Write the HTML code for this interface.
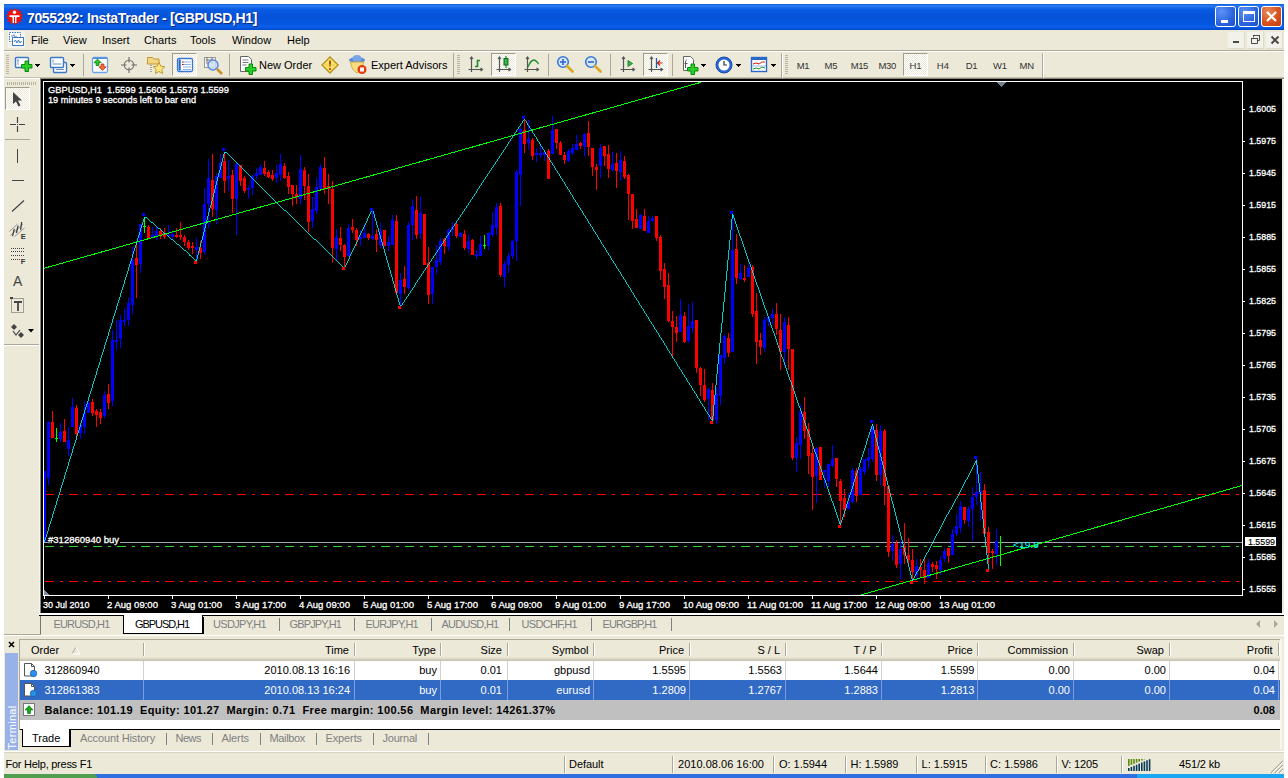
<!DOCTYPE html><html><head><meta charset="utf-8"><title>7055292: InstaTrader - [GBPUSD,H1]</title><style>
*{box-sizing:border-box;margin:0;padding:0}
html,body{width:1288px;height:778px;overflow:hidden;background:#fff}
body{position:relative;font-family:"Liberation Sans","DejaVu Sans",sans-serif;font-size:11px;color:#000}
.a{position:absolute}
.t{position:absolute;white-space:nowrap;line-height:13px;height:13px}
#win{left:4px;top:4px;width:1280px;height:770px;background:#ece9d8}
#title{left:4px;top:4px;width:1280px;height:26px;background:linear-gradient(#0a5fe0 0,#2c7bf0 2px,#0a5ce4 5px,#0453d9 12px,#0556df 20px,#0a5fe8 23px,#0046c8 26px)}
#title .tt{left:23px;top:5.500px;font-family:"Liberation Sans",sans-serif;font-weight:bold;font-size:14px;line-height:16px;height:16px;color:#fff;text-shadow:1px 1px 0 #0a2a80}
.cb{position:absolute;top:2px;width:21px;height:21px;border:1px solid #fff;border-radius:3px;background:radial-gradient(circle at 30% 25%,#5f92f5 0,#2a63de 60%,#1b50c8 100%)}
.cb.x{background:radial-gradient(circle at 30% 25%,#e8895a 0,#d9531e 55%,#c23c10 100%)}
.menu{color:#000}
.sep{position:absolute;width:1px;background:#aca899}
.grip{position:absolute;width:3px;background:repeating-linear-gradient(#b8b4a0 0,#b8b4a0 1px,transparent 1px,transparent 2px)}
.pressed{position:absolute;background:#f7f6ef;border:1px solid;border-color:#a09c8c #fff #fff #a09c8c;background-image:repeating-conic-gradient(#fff 0 25%,#ece9d8 0 50%);background-size:2px 2px}
.tf{color:#333}
.hdr{position:absolute;top:640px;height:19px}
.cell{position:absolute;white-space:nowrap;line-height:13px;height:13px;text-align:right}
.st{position:absolute;top:758px;white-space:nowrap;line-height:13px}
.ssep{position:absolute;top:756px;width:2px;height:17px;border-left:1px solid #aca899;border-right:1px solid #fff}
.ax{font-size:9.5px;fill:#fff;stroke:#fff;stroke-width:.3px;font-family:"Liberation Sans",sans-serif}
</style></head><body>
<div class="a" id="win"></div>
<div class="a" id="title"><div class="t tt" style="letter-spacing:-0.352px;">7055292: InstaTrader - [GBPUSD,H1]</div>
<svg class="a" style="left:2px;top:4px" width="17" height="17" viewBox="0 0 17 17"><polygon points="8.5,0 10,2.2 12.5,0.8 12.8,3.6 15.6,3 14.6,5.6 17,6.8 15,8.5 17,10.4 14.4,11.2 15.4,13.9 12.7,13.4 12.3,16.2 10,14.8 8.5,17 7,14.8 4.7,16.2 4.3,13.4 1.6,13.9 2.6,11.2 0,10.4 2,8.5 0,6.8 2.4,5.6 1.4,3 4.2,3.6 4.5,0.8 7,2.2" fill="#f0120a"/><circle cx="8.5" cy="4.3" r="1.7" fill="#fff"/><path d="M3.5 7.2h10v1.8h-1.6c-1 0-1.5.6-1.5 1.5v4.5h-1.4V9h-1v6h-1.400v-4.500c0-.9-.5-1.500-1.500-1.500H3.500z" fill="#fff"/></svg>
<div class="cb" style="left:1211px"><div class="a" style="left:5px;top:13px;width:7px;height:3px;background:#fff"></div></div>
<div class="cb" style="left:1234px"><div class="a" style="left:4px;top:4px;width:12px;height:11px;border:1px solid #fff;border-top-width:3px"></div></div>
<div class="cb x" style="left:1257px"><svg class="a" style="left:0;top:0" width="19" height="19"><path d="M5 5l9 9M14 5l-9 9" stroke="#fff" stroke-width="2.2" fill="none"/></svg></div>
</div>
<div class="a" style="left:4px;top:50px;width:1280px;height:1px;background:#aca899"></div><div class="a" style="left:4px;top:51px;width:1280px;height:1px;background:#fff"></div>
<svg class="a" style="left:8px;top:31px" width="17" height="17" viewBox="0 0 17 17"><rect x="0" y="0" width="17" height="17" fill="#f4f3ee"/><rect x="1.5" y="1.500" width="11" height="9" fill="#fff" stroke="#3c78c8" stroke-dasharray="1.5 1"/><rect x="4.500" y="6.500" width="11" height="8" fill="#fff" stroke="#3c78c8"/><path d="M6 11l1.500-2 1.500 3 1.500-3 1.500 3 1.500-2" stroke="#3c78c8" fill="none"/><path d="M3 5h2l1-1.500 1 2.500 2-1" stroke="#3c78c8" fill="none" stroke-width=".8"/></svg>
<div class="t menu" style="left:31px;top:34px;font-size:11px">File</div>
<div class="t menu" style="left:63px;top:34px;font-size:11px">View</div>
<div class="t menu" style="left:102px;top:34px;font-size:11px">Insert</div>
<div class="t menu" style="left:144px;top:34px;font-size:11px">Charts</div>
<div class="t menu" style="left:190px;top:34px;font-size:11px">Tools</div>
<div class="t menu" style="left:232px;top:34px;font-size:11px">Window</div>
<div class="t menu" style="left:287px;top:34px;font-size:11px">Help</div>
<div class="a" style="left:1228px;top:32px;width:17px;height:17px;background:#f3f2ea;border-right:1px solid #dedbc8;border-bottom:1px solid #dedbc8"></div>
<div class="a" style="left:1247px;top:32px;width:17px;height:17px;background:#f3f2ea;border-right:1px solid #dedbc8;border-bottom:1px solid #dedbc8"></div>
<div class="a" style="left:1266px;top:32px;width:17px;height:17px;background:#f3f2ea;border-right:1px solid #dedbc8;border-bottom:1px solid #dedbc8"></div>
<div class="a" style="left:1233px;top:41px;width:6px;height:2px;background:#4a4a4a"></div>
<svg class="a" style="left:1250px;top:34px" width="12" height="12"><path d="M3.500 3.500V1.500H9.500V6.500H7.500M1.500 4.500H7.500V9.500H1.500z" fill="none" stroke="#4a4a4a" stroke-width="1"/><path d="M1 4.500h7M3 1.500h7" stroke="#4a4a4a" stroke-width="1.200"/></svg>
<svg class="a" style="left:1270px;top:35px" width="10" height="10"><path d="M1.500 1.500l7 7M8.500 1.500l-7 7" stroke="#4a4a4a" stroke-width="2" fill="none"/></svg>
<div class="a" style="left:4px;top:77px;width:1280px;height:1px;background:#c5c2b2"></div>
<div class="grip" style="left:6px;top:55px;height:20px"></div>
<svg class="a" style="left:14px;top:56px" width="20" height="18" viewBox="0 0 20 18"><rect x="1.500" y="1.500" width="13" height="10" rx="1" fill="#fff" stroke="#3c78c8" stroke-width="1.400"/><path d="M4 4v5M3 5l1-1.500 1 1.500" stroke="#7aa0d0" fill="none"/><path d="M7.500 8.500h3.500v-3.500h3.500v3.500h3.500v3.500h-3.500v3.500h-3.500v-3.500h-3.500z" fill="#28d028" stroke="#0a8a0a"/></svg>
<svg class="a" style="left:35px;top:64px" width="5" height="3" shape-rendering="crispEdges"><path d="M0 0h5v1h-5zM1 1h3v1h-3zM2 2h1v1h-1z" fill="#000"/></svg>
<svg class="a" style="left:49px;top:56px" width="20" height="18" viewBox="0 0 20 18"><rect x="4.500" y="6.500" width="13" height="10" rx="1" fill="#fff" stroke="#3c78c8" stroke-width="1.400"/><rect x="1.500" y="1.500" width="13" height="10" rx="1" fill="#fff" stroke="#3c78c8" stroke-width="1.400"/><path d="M4 3.500v3M3.500 8h9M7 13.500h8" stroke="#6a90c0" fill="none"/></svg>
<svg class="a" style="left:70px;top:64px" width="5" height="3" shape-rendering="crispEdges"><path d="M0 0h5v1h-5zM1 1h3v1h-3zM2 2h1v1h-1z" fill="#000"/></svg>
<div class="sep" style="left:83px;top:54px;height:22px"></div>
<svg class="a" style="left:91px;top:56px" width="18" height="18" viewBox="0 0 18 18"><rect x="1.500" y="1.500" width="15" height="15" rx="1.500" fill="#fff" stroke="#6aa6ee" stroke-width="1.300"/><path d="M2 2.200h14" stroke="#4a86de" stroke-width="1.400"/><path d="M6.500 3l3.700 3.700h-2.200v2.800h-3v-2.800h-2.200z" fill="#2fbf2f" stroke="#0a7a0a" stroke-width=".7"/><path d="M11.500 14.500l-3.700-3.700h2.200v-2.800h3v2.800h2.200z" fill="#f06a3a" stroke="#b03010" stroke-width=".7"/></svg>
<svg class="a" style="left:120px;top:56px" width="18" height="18" viewBox="0 0 18 18"><circle cx="9" cy="9" r="4.800" fill="none" stroke="#777" stroke-width="1.100"/><path d="M9 1v5.500M9 11.500v5.500M1 9h5.500M11.500 9h5.500" stroke="#666" stroke-width="1.100"/></svg>
<svg class="a" style="left:146px;top:55px" width="20" height="20" viewBox="0 0 20 20"><path d="M1.500 4.500v-2h5l1.500 1.500h5v5h-11.500z" fill="#f3d680" stroke="#c09a30"/><path d="M5 10v8" stroke="#666" stroke-dasharray="1 1"/><path d="M13 7.500l1.800 3.700 4 .5-3 2.800.8 4-3.600-2-3.600 2 .8-4-3-2.800 4-.5z" fill="#ffe680" stroke="#c09a30"/></svg>
<div class="pressed" style="left:172px;top:53px;width:25px;height:23px"></div>
<svg class="a" style="left:176px;top:56px" width="18" height="18" viewBox="0 0 18 18"><rect x="1.500" y="2.500" width="15" height="13" rx="1.500" fill="#fff" stroke="#3a78d0" stroke-width="1.300"/><rect x="2.500" y="3.500" width="2.200" height="11" fill="#2a68c8"/><path d="M7 6h8M7 8.500h8M7 11h8M7 13.500h8" stroke="#8ab0e8" stroke-width="1"/><path d="M6 6h1.500M6 8.500h1.500" stroke="#d00" stroke-width="1"/></svg>
<svg class="a" style="left:203px;top:55px" width="21" height="21" viewBox="0 0 21 21"><rect x="1.500" y="2.500" width="11" height="10" fill="#f4f4f4" stroke="#999"/><path d="M4 2v7M9 2v7M3 5h7" stroke="#777"/><circle cx="10" cy="10" r="5" fill="#cfe0f8" fill-opacity=".8" stroke="#5a8ad8" stroke-width="1.500"/><path d="M14 14l5 5" stroke="#c89020" stroke-width="2.500"/></svg>
<div class="sep" style="left:229px;top:54px;height:22px"></div>
<svg class="a" style="left:238px;top:55px" width="20" height="21" viewBox="0 0 20 21"><path d="M2.500 1.500h8l3 3v12h-11z" fill="#fff" stroke="#666"/><path d="M4.500 5h6M4.500 7.500h6M4.500 10h4" stroke="#777"/><path d="M7.500 12.500h3.500v-3.500h3.500v3.500h3.500v3.500h-3.500v3.500h-3.500v-3.500h-3.500z" fill="#28d028" stroke="#0a8a0a"/></svg>
<div class="t" style="left:259px;top:59px;font-size:11px">New Order</div>
<svg class="a" style="left:321px;top:56px" width="18" height="18" viewBox="0 0 18 18"><path d="M9 1l8 8-8 8-8-8z" fill="#fbe36a" stroke="#b8901a" stroke-width="1.400"/><path d="M9 4.500v6" stroke="#a03010" stroke-width="1.600"/><circle cx="9" cy="13" r="1" fill="#a03010"/><path d="M4 9h10" stroke="#e8c040" stroke-width=".8"/></svg>
<svg class="a" style="left:348px;top:54px" width="20" height="22" viewBox="0 0 20 22"><ellipse cx="9" cy="6" rx="8" ry="3" fill="#5a8ad8"/><ellipse cx="9" cy="4.500" rx="4.500" ry="3.500" fill="#7aa6e8"/><path d="M2.500 8c1 6 3 9 6.500 11 3.500-2 5.500-5 6.500-11z" fill="#f8de80" stroke="#c8a030" stroke-width=".8"/><circle cx="14" cy="15.500" r="4.500" fill="#e83a10"/><rect x="12" y="13.500" width="4" height="4" fill="#fff"/></svg>
<div class="t" style="left:371px;top:59px;font-size:11px">Expert Advisors</div>
<div class="sep" style="left:453px;top:53px;height:25px"></div>
<div class="grip" style="left:457px;top:55px;height:20px"></div>
<svg class="a" style="left:468px;top:56px" width="16" height="18" viewBox="0 0 16 18"><path d="M3.500 1v15M0.500 13.500h14M2 3l1.500-2 1.500 2M12.500 12l2 1.500-2 1.500" stroke="#555" stroke-width="1.200" fill="none"/><path d="M7 10.500h2.500v-6h2.500" stroke="#1a8a2a" stroke-width="1.600" fill="none"/></svg>
<div class="pressed" style="left:491px;top:53px;width:25px;height:23px"></div>
<svg class="a" style="left:496px;top:55px" width="16" height="19" viewBox="0 0 16 19"><path d="M3.500 2v15M0.500 14.500h14M2 4l1.500-2 1.500 2M12.500 13l2 1.500-2 1.500" stroke="#555" stroke-width="1.200" fill="none"/><path d="M10 1v12" stroke="#1a8a2a" stroke-width="1.200"/><rect x="8" y="3.500" width="4" height="6.500" fill="#3cb04c" stroke="#0a6a1a"/></svg>
<svg class="a" style="left:524px;top:56px" width="16" height="18" viewBox="0 0 16 18"><path d="M3.500 1v15M0.500 13.500h14M2 3l1.500-2 1.500 2M12.500 12l2 1.500-2 1.500" stroke="#555" stroke-width="1.200" fill="none"/><path d="M4 11c2-5 4-7 6-7s3 2 4.500 4" stroke="#1a8a2a" stroke-width="1.300" fill="none"/></svg>
<div class="sep" style="left:548px;top:54px;height:22px"></div>
<svg class="a" style="left:556px;top:55px" width="19" height="19" viewBox="0 0 19 19"><circle cx="7" cy="7" r="5.300" fill="#d6e6fb" stroke="#3a78d8" stroke-width="1.600"/><path d="M11 11l5.500 5.500" stroke="#d8a820" stroke-width="2.600" stroke-linecap="round"/><path d="M4 7h6" stroke="#2a68c8" stroke-width="1.600"/><path d="M7 4v6" stroke="#2a68c8" stroke-width="1.600"/></svg>
<svg class="a" style="left:584px;top:55px" width="19" height="19" viewBox="0 0 19 19"><circle cx="7" cy="7" r="5.300" fill="#d6e6fb" stroke="#3a78d8" stroke-width="1.600"/><path d="M11 11l5.500 5.500" stroke="#d8a820" stroke-width="2.600" stroke-linecap="round"/><path d="M4 7h6" stroke="#2a68c8" stroke-width="1.600"/></svg>
<div class="sep" style="left:610px;top:54px;height:22px"></div>
<svg class="a" style="left:620px;top:56px" width="16" height="18" viewBox="0 0 16 18"><path d="M3.500 1v15M0.500 13.500h14M2 3l1.500-2 1.500 2M12.500 12l2 1.500-2 1.500" stroke="#555" stroke-width="1.200" fill="none"/><path d="M8 4.500l4.500 3-4.500 3z" fill="#3cb04c" stroke="#1a8a2a"/></svg>
<div class="pressed" style="left:643px;top:53px;width:25px;height:23px"></div>
<svg class="a" style="left:648px;top:56px" width="16" height="18" viewBox="0 0 16 18"><path d="M3.500 1v15M0.500 13.500h14M2 3l1.500-2 1.500 2M12.500 12l2 1.500-2 1.500" stroke="#555" stroke-width="1.200" fill="none"/><path d="M8.500 2v10" stroke="#1a5ab8" stroke-width="1.300"/><path d="M14.500 7h-5M12 4.500l-2.500 2.500 2.500 2.500" stroke="#c02010" stroke-width="1.200" fill="none"/></svg>
<div class="sep" style="left:672px;top:54px;height:22px"></div>
<svg class="a" style="left:681px;top:55px" width="20" height="21" viewBox="0 0 20 21"><path d="M2.500 1.500h7l3 3v11h-10z" fill="#fff" stroke="#666"/><path d="M6 5c-1 0-1.500 1-1.500 2v6M3.500 8.500h3" stroke="#555" fill="none"/><path d="M6.500 12.500h3.500v-3.500h3.500v3.500h3.500v3.500h-3.500v3.500h-3.500v-3.500h-3.500z" fill="#28d028" stroke="#0a8a0a"/></svg>
<svg class="a" style="left:701px;top:64px" width="5" height="3" shape-rendering="crispEdges"><path d="M0 0h5v1h-5zM1 1h3v1h-3zM2 2h1v1h-1z" fill="#000"/></svg>
<svg class="a" style="left:715px;top:56px" width="18" height="18" viewBox="0 0 18 18"><circle cx="9" cy="9" r="8" fill="#2a68d8" stroke="#1a48a8"/><circle cx="9" cy="9" r="5.500" fill="#fff"/><path d="M9 5v4h3" stroke="#333" stroke-width="1.200" fill="none"/></svg>
<svg class="a" style="left:736px;top:64px" width="5" height="3" shape-rendering="crispEdges"><path d="M0 0h5v1h-5zM1 1h3v1h-3zM2 2h1v1h-1z" fill="#000"/></svg>
<svg class="a" style="left:750px;top:56px" width="18" height="18" viewBox="0 0 18 18"><rect x="1.500" y="1.500" width="15" height="14" fill="#fff" stroke="#2a68c8" stroke-width="1.400"/><rect x="1.500" y="1.500" width="15" height="2.500" fill="#2a68c8"/><path d="M3 8l3-1 3 1 3-2 3 0" stroke="#d02010" fill="none"/><path d="M3 13l3-1 3 1 3-2 3 1" stroke="#1a9a2a" fill="none"/><path d="M2 10h14" stroke="#9ab8e8"/></svg>
<svg class="a" style="left:771px;top:64px" width="5" height="3" shape-rendering="crispEdges"><path d="M0 0h5v1h-5zM1 1h3v1h-3zM2 2h1v1h-1z" fill="#000"/></svg>
<div class="a" style="left:781px;top:53px;width:2px;height:25px;border-left:1px solid #aca899;border-right:1px solid #fff"></div>
<div class="grip" style="left:785px;top:55px;height:20px"></div>
<div class="pressed" style="left:903px;top:53px;width:25px;height:23px"></div>
<div class="t tf" style="letter-spacing:-0.352px;left:796.8px;top:59px;font-size:9.500px">M1</div>
<div class="t tf" style="letter-spacing:-0.202px;left:824.5px;top:59px;font-size:9.500px">M5</div>
<div class="t tf" style="letter-spacing:-0.428px;left:850.7px;top:59px;font-size:9.500px">M15</div>
<div class="t tf" style="letter-spacing:-0.395px;left:878.6px;top:59px;font-size:9.500px">M30</div>
<div class="t tf" style="letter-spacing:-0.128px;left:909.5px;top:59px;font-size:9.500px">H1</div>
<div class="t tf" style="letter-spacing:0.172px;left:936.8px;top:59px;font-size:9.500px">H4</div>
<div class="t tf" style="letter-spacing:-0.278px;left:965.7px;top:59px;font-size:9.500px">D1</div>
<div class="t tf" style="letter-spacing:-0.125px;left:993px;top:59px;font-size:9.500px">W1</div>
<div class="t tf" style="letter-spacing:-0.241px;left:1019.6px;top:59px;font-size:9.500px">MN</div>
<div class="a" style="left:1042px;top:53px;width:2px;height:25px;border-left:1px solid #aca899;border-right:1px solid #fff"></div>
<div class="a" style="left:4px;top:78px;width:36px;height:1px;background:#fff"></div>
<div class="a" style="left:39px;top:79px;width:1px;height:534px;background:#f6f5ee"></div>
<div class="a" style="left:40px;top:79px;width:1px;height:534px;background:#8a8878"></div>
<div class="a" style="left:7px;top:82px;width:29px;height:3px;background:repeating-linear-gradient(90deg,#b8b4a0 0,#b8b4a0 1px,transparent 1px,transparent 2px)"></div>
<div class="pressed" style="left:5px;top:87px;width:25px;height:23px"></div>
<svg class="a" style="left:11px;top:91px" width="12" height="16" viewBox="0 0 12 16"><path d="M2 1v12l3-2.500 2.500 5 2-1-2.500-5h4z" fill="#444"/></svg>
<svg class="a" style="left:10px;top:117px" width="15" height="15" viewBox="0 0 15 15"><path d="M7.500 0v6M7.500 9v6M0 7.500h6M9 7.500h6" stroke="#444" stroke-width="1.200"/><rect x="7" y="7" width="1" height="1" fill="#444"/></svg>
<div class="a" style="left:5px;top:139px;width:25px;height:1px;background:#aca899"></div>
<div class="a" style="left:17px;top:149px;width:1px;height:14px;background:#444"></div>
<div class="a" style="left:12px;top:180px;width:12px;height:1px;background:#444"></div>
<svg class="a" style="left:10px;top:198px" width="16" height="16" viewBox="0 0 16 16"><path d="M2 13.500L14 2.500" stroke="#444" stroke-width="1.200"/></svg>
<svg class="a" style="left:4px;top:215px" width="36" height="55" viewBox="0 0 36 55"><path d="M5.300 16.600L13.800 8.800M6.400 20.500L19 9.200M10.600 21.600L20.500 13" stroke="#9a9a9a" stroke-width="1"/><path d="M8.500 21.200L10.300 13.800M12.400 18L14.100 10.600M16.600 14.900L17.700 7" stroke="#444" stroke-width="1.300"/><text x="16.800" y="23.800" font-size="7.500" font-weight="bold" fill="#333" font-family="Liberation Sans,sans-serif">E</text><path d="M7 33.500h14M7 36.500h14M7 40.500h14M7 44.500h10" stroke="#444" stroke-width="1" stroke-dasharray="1 1"/><text x="16.800" y="48.800" font-size="7.500" font-weight="bold" fill="#333" font-family="Liberation Sans,sans-serif">F</text></svg>
<div class="t" style="left:13px;top:273px;font-size:14px;line-height:16px;height:16px;color:#444">A</div>
<svg class="a" style="left:10px;top:297px" width="16" height="17" viewBox="0 0 16 17"><rect x="1.500" y="1.500" width="12" height="14" fill="none" stroke="#555" stroke-dasharray="1 1"/><path d="M4 5h8M8 5v9" stroke="#444" stroke-width="1.800"/><rect x="0" y="0" width="3" height="2" fill="#444"/></svg>
<svg class="a" style="left:10px;top:323px" width="16" height="16" viewBox="0 0 16 16"><path d="M4 1l3 3-3 3-3-3z" fill="#444"/><path d="M11 9l3 3-3 3-3-3z" fill="#444"/><path d="M3 8l3 4 4-5" stroke="#444" stroke-width="1.200" fill="none"/></svg>
<svg class="a" style="left:28px;top:329px" width="7" height="4" viewBox="0 0 7 4"><path d="M0 0h6l-3 3.500z" fill="#000"/></svg>
<div class="a" style="left:4px;top:344px;width:35px;height:1px;background:#aca899"></div><div class="a" style="left:4px;top:345px;width:35px;height:1px;background:#fff"></div>
<svg class="a" style="left:0;top:0" width="1288" height="778" viewBox="0 0 1288 778" shape-rendering="crispEdges">
<rect x="40" y="78" width="1244" height="1" fill="#8a8674"/>
<rect x="41" y="79" width="1241" height="534" fill="#000"/>
<rect x="43.500" y="81.500" width="1199" height="514" fill="none" stroke="#fff" stroke-width="1"/>
<rect x="1243" y="109" width="2" height="1" fill="#fff"/>
<text class="ax" x="1249" y="112" textLength="27" lengthAdjust="spacingAndGlyphs">1.6005</text>
<rect x="1243" y="141" width="2" height="1" fill="#fff"/>
<text class="ax" x="1249" y="144" textLength="27" lengthAdjust="spacingAndGlyphs">1.5975</text>
<rect x="1243" y="173" width="2" height="1" fill="#fff"/>
<text class="ax" x="1249" y="176" textLength="27" lengthAdjust="spacingAndGlyphs">1.5945</text>
<rect x="1243" y="205" width="2" height="1" fill="#fff"/>
<text class="ax" x="1249" y="208" textLength="27" lengthAdjust="spacingAndGlyphs">1.5915</text>
<rect x="1243" y="237" width="2" height="1" fill="#fff"/>
<text class="ax" x="1249" y="240" textLength="27" lengthAdjust="spacingAndGlyphs">1.5885</text>
<rect x="1243" y="269" width="2" height="1" fill="#fff"/>
<text class="ax" x="1249" y="272" textLength="27" lengthAdjust="spacingAndGlyphs">1.5855</text>
<rect x="1243" y="301" width="2" height="1" fill="#fff"/>
<text class="ax" x="1249" y="304" textLength="27" lengthAdjust="spacingAndGlyphs">1.5825</text>
<rect x="1243" y="333" width="2" height="1" fill="#fff"/>
<text class="ax" x="1249" y="336" textLength="27" lengthAdjust="spacingAndGlyphs">1.5795</text>
<rect x="1243" y="365" width="2" height="1" fill="#fff"/>
<text class="ax" x="1249" y="368" textLength="27" lengthAdjust="spacingAndGlyphs">1.5765</text>
<rect x="1243" y="397" width="2" height="1" fill="#fff"/>
<text class="ax" x="1249" y="400" textLength="27" lengthAdjust="spacingAndGlyphs">1.5735</text>
<rect x="1243" y="429" width="2" height="1" fill="#fff"/>
<text class="ax" x="1249" y="432" textLength="27" lengthAdjust="spacingAndGlyphs">1.5705</text>
<rect x="1243" y="461" width="2" height="1" fill="#fff"/>
<text class="ax" x="1249" y="464" textLength="27" lengthAdjust="spacingAndGlyphs">1.5675</text>
<rect x="1243" y="493" width="2" height="1" fill="#fff"/>
<text class="ax" x="1249" y="496" textLength="27" lengthAdjust="spacingAndGlyphs">1.5645</text>
<rect x="1243" y="525" width="2" height="1" fill="#fff"/>
<text class="ax" x="1249" y="528" textLength="27" lengthAdjust="spacingAndGlyphs">1.5615</text>
<rect x="1243" y="557" width="2" height="1" fill="#fff"/>
<text class="ax" x="1249" y="560" textLength="27" lengthAdjust="spacingAndGlyphs">1.5585</text>
<rect x="1243" y="589" width="2" height="1" fill="#fff"/>
<text class="ax" x="1249" y="592" textLength="27" lengthAdjust="spacingAndGlyphs">1.5555</text>
<rect x="44" y="596" width="1" height="3" fill="#fff"/>
<text class="ax" x="43" y="608" textLength="46.5" lengthAdjust="spacingAndGlyphs">30 Jul 2010</text>
<rect x="108" y="596" width="1" height="3" fill="#fff"/>
<text class="ax" x="107" y="608" textLength="51" lengthAdjust="spacingAndGlyphs">2 Aug 09:00</text>
<rect x="172" y="596" width="1" height="3" fill="#fff"/>
<text class="ax" x="171" y="608" textLength="51" lengthAdjust="spacingAndGlyphs">3 Aug 01:00</text>
<rect x="236" y="596" width="1" height="3" fill="#fff"/>
<text class="ax" x="235" y="608" textLength="51" lengthAdjust="spacingAndGlyphs">3 Aug 17:00</text>
<rect x="300" y="596" width="1" height="3" fill="#fff"/>
<text class="ax" x="299" y="608" textLength="51" lengthAdjust="spacingAndGlyphs">4 Aug 09:00</text>
<rect x="364" y="596" width="1" height="3" fill="#fff"/>
<text class="ax" x="363" y="608" textLength="51" lengthAdjust="spacingAndGlyphs">5 Aug 01:00</text>
<rect x="428" y="596" width="1" height="3" fill="#fff"/>
<text class="ax" x="427" y="608" textLength="51" lengthAdjust="spacingAndGlyphs">5 Aug 17:00</text>
<rect x="492" y="596" width="1" height="3" fill="#fff"/>
<text class="ax" x="491" y="608" textLength="51" lengthAdjust="spacingAndGlyphs">6 Aug 09:00</text>
<rect x="556" y="596" width="1" height="3" fill="#fff"/>
<text class="ax" x="555" y="608" textLength="51" lengthAdjust="spacingAndGlyphs">9 Aug 01:00</text>
<rect x="620" y="596" width="1" height="3" fill="#fff"/>
<text class="ax" x="619" y="608" textLength="51" lengthAdjust="spacingAndGlyphs">9 Aug 17:00</text>
<rect x="684" y="596" width="1" height="3" fill="#fff"/>
<text class="ax" x="683" y="608" textLength="56" lengthAdjust="spacingAndGlyphs">10 Aug 09:00</text>
<rect x="748" y="596" width="1" height="3" fill="#fff"/>
<text class="ax" x="747" y="608" textLength="56" lengthAdjust="spacingAndGlyphs">11 Aug 01:00</text>
<rect x="812" y="596" width="1" height="3" fill="#fff"/>
<text class="ax" x="811" y="608" textLength="56" lengthAdjust="spacingAndGlyphs">11 Aug 17:00</text>
<rect x="876" y="596" width="1" height="3" fill="#fff"/>
<text class="ax" x="875" y="608" textLength="56" lengthAdjust="spacingAndGlyphs">12 Aug 09:00</text>
<rect x="940" y="596" width="1" height="3" fill="#fff"/>
<text class="ax" x="939" y="608" textLength="56" lengthAdjust="spacingAndGlyphs">13 Aug 01:00</text>
<path d="M44 494.500H1242M44 581.500H1242" stroke="#ff0000" stroke-width="1" stroke-dasharray="9 6 3 6" stroke-dashoffset="-1" fill="none"/>
<path d="M44 542.500H1242" stroke="#a0a8b8" stroke-width="1" fill="none"/>
<path d="M44 546.500H1242" stroke="#32cd32" stroke-width="1" stroke-dasharray="9 6 3 6" stroke-dashoffset="-1" fill="none"/>
<path d="M44 471h1v71h-1zM44 471h2v71h-2zM48 421h1v64h-1zM47 422h3v56h-3zM60 423h1v19h-1zM59 432h3v7h-3zM68 427h1v29h-1zM67 440h3v9h-3zM72 398h1v29h-1zM71 407h3v20h-3zM80 424h1v15h-1zM79 425h3v8h-3zM84 401h1v33h-1zM83 413h3v14h-3zM88 401h1v12h-1zM87 403h3v10h-3zM104 391h1v27h-1zM103 395h3v21h-3zM112 330h1v76h-1zM111 340h3v61h-3zM116 320h1v30h-1zM115 340h3v2h-3zM120 315h1v33h-1zM119 320h3v19h-3zM124 309h1v17h-1zM123 320h3v2h-3zM128 297h1v29h-1zM127 303h3v17h-3zM132 247h1v67h-1zM131 260h3v45h-3zM140 224h1v49h-1zM139 224h3v40h-3zM152 227h1v11h-1zM151 235h3v2h-3zM156 227h1v13h-1zM155 231h3v5h-3zM168 225h1v12h-1zM167 235h3v1h-3zM172 232h1v7h-1zM171 234h3v3h-3zM196 238h1v23h-1zM195 247h3v3h-3zM204 188h1v67h-1zM203 204h3v48h-3zM208 159h1v69h-1zM207 178h3v26h-3zM216 173h1v51h-1zM215 176h3v34h-3zM220 154h1v24h-1zM219 163h3v15h-3zM228 160h1v31h-1zM227 176h3v3h-3zM236 163h1v72h-1zM235 164h3v35h-3zM248 185h1v14h-1zM247 188h3v2h-3zM252 175h1v20h-1zM251 176h3v12h-3zM256 168h1v11h-1zM255 173h3v3h-3zM260 164h1v11h-1zM259 167h3v8h-3zM276 165h1v18h-1zM275 173h3v5h-3zM280 154h1v27h-1zM279 164h3v11h-3zM300 155h1v50h-1zM299 169h3v30h-3zM312 197h1v31h-1zM311 209h3v12h-3zM316 178h1v36h-1zM315 187h3v24h-3zM320 164h1v25h-1zM319 167h3v22h-3zM336 229h1v32h-1zM335 237h3v12h-3zM348 224h1v32h-1zM347 228h3v28h-3zM360 230h1v16h-1zM359 237h3v2h-3zM364 224h1v14h-1zM363 233h3v5h-3zM372 209h1v31h-1zM371 236h3v3h-3zM380 223h1v25h-1zM379 231h3v14h-3zM388 236h1v15h-1zM387 242h3v4h-3zM392 215h1v30h-1zM391 220h3v25h-3zM400 273h1v34h-1zM399 280h3v14h-3zM408 222h1v68h-1zM407 225h3v63h-3zM412 199h1v41h-1zM411 206h3v19h-3zM420 197h1v42h-1zM419 213h3v21h-3zM432 267h1v37h-1zM431 267h3v27h-3zM436 245h1v29h-1zM435 260h3v7h-3zM440 238h1v27h-1zM439 241h3v21h-3zM448 229h1v22h-1zM447 230h3v17h-3zM452 222h1v14h-1zM451 227h3v3h-3zM460 232h1v5h-1zM459 233h3v4h-3zM468 234h1v19h-1zM467 241h3v8h-3zM476 250h1v9h-1zM475 254h3v2h-3zM480 236h1v20h-1zM479 244h3v12h-3zM488 232h1v18h-1zM487 233h3v13h-3zM492 212h1v25h-1zM491 225h3v10h-3zM496 203h1v32h-1zM495 207h3v21h-3zM504 261h1v26h-1zM503 264h3v13h-3zM508 253h1v20h-1zM507 256h3v9h-3zM512 240h1v19h-1zM511 241h3v15h-3zM516 170h1v91h-1zM515 172h3v69h-3zM520 127h1v79h-1zM519 129h3v46h-3zM528 120h1v30h-1zM527 139h3v4h-3zM536 148h1v14h-1zM535 153h3v2h-3zM540 145h1v13h-1zM539 153h3v2h-3zM544 150h1v11h-1zM543 152h3v3h-3zM552 116h1v38h-1zM551 130h3v24h-3zM568 149h1v13h-1zM567 151h3v10h-3zM572 144h1v11h-1zM571 148h3v5h-3zM576 135h1v15h-1zM575 144h3v6h-3zM584 133h1v24h-1zM583 134h3v13h-3zM600 144h1v34h-1zM599 148h3v18h-3zM612 152h1v20h-1zM611 164h3v6h-3zM620 151h1v30h-1zM619 160h3v12h-3zM640 214h1v15h-1zM639 215h3v14h-3zM648 216h1v17h-1zM647 221h3v12h-3zM652 216h1v6h-1zM651 218h3v3h-3zM680 299h1v33h-1zM679 315h3v17h-3zM688 304h1v39h-1zM687 326h3v15h-3zM692 302h1v31h-1zM691 321h3v7h-3zM708 388h1v32h-1zM707 389h3v10h-3zM716 387h1v37h-1zM715 394h3v26h-3zM720 355h1v50h-1zM719 355h3v41h-3zM724 334h1v30h-1zM723 336h3v22h-3zM732 214h1v138h-1zM731 250h3v102h-3zM740 264h1v16h-1zM739 273h3v6h-3zM748 264h1v13h-1zM747 268h3v9h-3zM764 317h1v35h-1zM763 320h3v28h-3zM768 316h1v10h-1zM767 317h3v4h-3zM772 309h1v15h-1zM771 314h3v4h-3zM784 317h1v49h-1zM783 322h3v30h-3zM796 437h1v35h-1zM795 443h3v15h-3zM800 405h1v54h-1zM799 411h3v34h-3zM816 447h1v56h-1zM815 448h3v28h-3zM824 470h1v18h-1zM823 470h3v2h-3zM828 464h1v23h-1zM827 464h3v17h-3zM832 445h1v22h-1zM831 459h3v7h-3zM848 493h1v16h-1zM847 502h3v7h-3zM852 468h1v35h-1zM851 470h3v32h-3zM860 467h1v28h-1zM859 469h3v26h-3zM864 459h1v16h-1zM863 459h3v13h-3zM868 448h1v21h-1zM867 457h3v4h-3zM872 424h1v38h-1zM871 427h3v32h-3zM880 425h1v60h-1zM879 431h3v44h-3zM892 535h1v26h-1zM891 544h3v7h-3zM900 541h1v38h-1zM899 549h3v15h-3zM916 559h1v21h-1zM915 566h3v9h-3zM928 559h1v19h-1zM927 563h3v15h-3zM940 556h1v19h-1zM939 560h3v10h-3zM944 548h1v14h-1zM943 551h3v8h-3zM952 529h1v26h-1zM951 534h3v21h-3zM956 514h1v22h-1zM955 526h3v8h-3zM960 501h1v32h-1zM959 506h3v22h-3zM968 506h1v21h-1zM967 509h3v12h-3zM972 487h1v54h-1zM971 497h3v12h-3zM976 459h1v46h-1zM975 492h3v5h-3zM980 472h1v49h-1zM979 491h3v3h-3zM996 529h1v36h-1zM995 541h3v13h-3z" fill="#0000ff"/>
<path d="M52 411h1v27h-1zM51 422h3v16h-3zM64 419h1v23h-1zM63 431h3v11h-3zM76 405h1v35h-1zM75 408h3v26h-3zM92 399h1v17h-1zM91 402h3v11h-3zM96 409h1v18h-1zM95 411h3v4h-3zM100 409h1v15h-1zM99 412h3v6h-3zM108 384h1v25h-1zM107 394h3v9h-3zM136 243h1v55h-1zM135 258h3v7h-3zM148 225h1v13h-1zM147 227h3v11h-3zM160 228h1v11h-1zM159 231h3v5h-3zM164 228h1v11h-1zM163 233h3v4h-3zM176 228h1v10h-1zM175 235h3v2h-3zM180 222h1v18h-1zM179 235h3v2h-3zM184 235h1v11h-1zM183 237h3v5h-3zM188 240h1v10h-1zM187 242h3v6h-3zM192 242h1v12h-1zM191 246h3v2h-3zM200 241h1v18h-1zM199 248h3v5h-3zM212 154h1v63h-1zM211 180h3v29h-3zM224 152h1v41h-1zM223 161h3v20h-3zM232 170h1v43h-1zM231 175h3v24h-3zM240 165h1v21h-1zM239 165h3v16h-3zM244 176h1v17h-1zM243 178h3v13h-3zM264 161h1v15h-1zM263 168h3v6h-3zM268 170h1v8h-1zM267 172h3v5h-3zM272 170h1v11h-1zM271 175h3v4h-3zM284 163h1v16h-1zM283 166h3v12h-3zM288 172h1v22h-1zM287 176h3v11h-3zM292 185h1v21h-1zM291 185h3v9h-3zM296 185h1v19h-1zM295 194h3v3h-3zM304 167h1v33h-1zM303 170h3v16h-3zM308 174h1v58h-1zM307 186h3v36h-3zM324 157h1v37h-1zM323 168h3v21h-3zM328 174h1v30h-1zM327 186h3v3h-3zM332 181h1v82h-1zM331 189h3v59h-3zM340 227h1v24h-1zM339 238h3v7h-3zM344 244h1v24h-1zM343 245h3v12h-3zM352 219h1v14h-1zM351 227h3v3h-3zM356 228h1v18h-1zM355 230h3v10h-3zM368 233h1v7h-1zM367 234h3v4h-3zM376 229h1v23h-1zM375 234h3v6h-3zM384 230h1v16h-1zM383 230h3v16h-3zM396 215h1v78h-1zM395 221h3v72h-3zM404 266h1v28h-1zM403 279h3v8h-3zM416 196h1v43h-1zM415 210h3v25h-3zM424 214h1v51h-1zM423 214h3v51h-3zM428 247h1v57h-1zM427 263h3v32h-3zM444 238h1v16h-1zM443 239h3v7h-3zM456 223h1v15h-1zM455 224h3v12h-3zM464 230h1v20h-1zM463 234h3v14h-3zM472 239h1v16h-1zM471 240h3v15h-3zM500 203h1v74h-1zM499 206h3v69h-3zM524 119h1v34h-1zM523 130h3v14h-3zM532 138h1v22h-1zM531 140h3v16h-3zM548 149h1v30h-1zM547 151h3v28h-3zM556 129h1v20h-1zM555 129h3v14h-3zM560 141h1v14h-1zM559 143h3v12h-3zM564 152h1v12h-1zM563 155h3v5h-3zM580 142h1v7h-1zM579 143h3v3h-3zM588 121h1v35h-1zM587 133h3v14h-3zM592 148h1v28h-1zM591 148h3v19h-3zM596 164h1v26h-1zM595 167h3v3h-3zM604 146h1v20h-1zM603 146h3v10h-3zM608 145h1v33h-1zM607 154h3v15h-3zM616 153h1v35h-1zM615 163h3v8h-3zM624 156h1v23h-1zM623 161h3v16h-3zM628 174h1v46h-1zM627 175h3v19h-3zM632 194h1v35h-1zM631 194h3v27h-3zM636 209h1v19h-1zM635 219h3v9h-3zM644 209h1v22h-1zM643 216h3v15h-3zM656 216h1v25h-1zM655 216h3v22h-3zM660 235h1v45h-1zM659 237h3v34h-3zM664 263h1v36h-1zM663 269h3v18h-3zM668 273h1v49h-1zM667 285h3v36h-3zM672 311h1v46h-1zM671 321h3v6h-3zM676 316h1v26h-1zM675 327h3v6h-3zM684 312h1v31h-1zM683 316h3v26h-3zM696 320h1v53h-1zM695 320h3v48h-3zM700 367h1v29h-1zM699 368h3v17h-3zM704 369h1v33h-1zM703 385h3v15h-3zM712 383h1v37h-1zM711 390h3v30h-3zM728 333h1v24h-1zM727 338h3v15h-3zM736 234h1v50h-1zM735 249h3v29h-3zM744 265h1v17h-1zM743 278h3v2h-3zM752 265h1v52h-1zM751 267h3v47h-3zM756 293h1v71h-1zM755 311h3v31h-3zM760 333h1v22h-1zM759 340h3v7h-3zM776 303h1v32h-1zM775 314h3v15h-3zM780 314h1v56h-1zM779 330h3v22h-3zM788 317h1v53h-1zM787 325h3v24h-3zM792 349h1v111h-1zM791 349h3v109h-3zM804 397h1v42h-1zM803 412h3v19h-3zM808 423h1v51h-1zM807 429h3v27h-3zM812 444h1v66h-1zM811 453h3v24h-3zM820 447h1v33h-1zM819 447h3v33h-3zM836 458h1v29h-1zM835 458h3v21h-3zM840 479h1v46h-1zM839 481h3v20h-3zM844 489h1v28h-1zM843 498h3v12h-3zM856 468h1v34h-1zM855 471h3v25h-3zM876 424h1v57h-1zM875 430h3v45h-3zM884 429h1v76h-1zM883 431h3v55h-3zM888 486h1v71h-1zM887 486h3v66h-3zM896 540h1v28h-1zM895 543h3v22h-3zM904 523h1v41h-1zM903 546h3v9h-3zM908 538h1v28h-1zM907 555h3v5h-3zM912 549h1v32h-1zM911 560h3v12h-3zM920 559h1v19h-1zM919 567h3v3h-3zM924 558h1v26h-1zM923 570h3v8h-3zM932 562h1v10h-1zM931 564h3v3h-3zM936 561h1v18h-1zM935 565h3v4h-3zM948 548h1v15h-1zM947 548h3v8h-3zM964 507h1v17h-1zM963 507h3v13h-3zM984 484h1v50h-1zM983 490h3v44h-3zM988 527h1v40h-1zM987 532h3v21h-3zM992 549h1v20h-1zM991 551h3v2h-3z" fill="#ff0000"/>
<path d="M56 428h1v14h-1zM55 438h3v1h-3zM144 217h1v16h-1zM143 226h3v1h-3zM484 235h1v14h-1zM483 245h3v1h-3zM1000 536h1v30h-1zM999 542h3v1h-3z" fill="#00ff00"/>
<path d="M44 268.300L701 82.300M861 595L1242 485.500" stroke="#00ff00" stroke-width="1" fill="none"/>
<path d="M44.5 542L144.5 217L196.5 261L224.5 152L344.5 268L372.5 209L400.5 307L524.5 119L712.5 421L732.5 214L840.5 525L872.5 424L912.5 581L976.5 459.5L988.5 569" stroke="#00ffff" stroke-width="0.8" fill="none"/>
<path d="M142 213h3v3h-3zM222 148h3v3h-3zM370 208h3v3h-3zM522 116h3v3h-3zM730 211h3v3h-3zM870 420h3v3h-3zM974 456h3v3h-3z" fill="#0000ff"/>
<path d="M194 261h3v3h-3zM342 267h3v3h-3zM398 306h3v3h-3zM710 421h3v3h-3zM838 525h3v3h-3zM910 581h3v3h-3zM986 569h3v3h-3z" fill="#ff0000"/>
<path d="M996 82h10l-5 5z" fill="#708090"/>
<path d="M44 590v5h5z" fill="#8090a0"/>
<rect x="1245" y="537" width="31" height="9" fill="#fff"/>
<text class="ax" x="1248" y="545" style="fill:#000;stroke:#000;stroke-width:.15px" textLength="27" lengthAdjust="spacingAndGlyphs">1.5599</text>
<text class="ax" x="48" y="93" textLength="181" lengthAdjust="spacingAndGlyphs" xml:space="preserve">GBPUSD,H1  1.5599 1.5605 1.5578 1.5599</text>
<text class="ax" x="48" y="103" textLength="148" lengthAdjust="spacingAndGlyphs">19 minutes 9 seconds left to bar end</text>
<rect x="48" y="533" width="72" height="11" fill="#000"/>
<text class="ax" x="48" y="543" textLength="71" lengthAdjust="spacingAndGlyphs">#312860940 buy</text>
<text class="ax" x="1013" y="548" style="fill:#00ffff;stroke:none;font-size:9px" textLength="26" lengthAdjust="spacingAndGlyphs">&lt;19.9</text>
</svg>
<div class="a" style="left:39px;top:613px;width:1245px;height:2px;background:#fff"></div>
<div class="a" style="left:39px;top:615px;width:1245px;height:1px;background:#000"></div>
<div class="a" style="left:40px;top:616px;width:1px;height:18px;background:#7a7868"></div>
<div class="a" style="left:4px;top:634px;width:37px;height:1px;background:#aca899"></div>
<div class="a" style="left:123px;top:615px;width:80px;height:19px;background:#fff;border:1px solid #000;border-top:none"></div>
<div class="a" style="left:203px;top:617px;width:1px;height:17px;background:#000"></div>
<div class="t" style="letter-spacing:-0.842px;left:53.5px;top:618px;color:#808080">EURUSD,H1</div>
<div class="t" style="letter-spacing:-1.064px;left:135px;top:618px;color:#000">GBPUSD,H1</div>
<div class="t" style="letter-spacing:-0.679px;left:213px;top:618px;color:#808080">USDJPY,H1</div>
<div class="t" style="letter-spacing:-0.845px;left:289.5px;top:618px;color:#808080">GBPJPY,H1</div>
<div class="t" style="letter-spacing:-0.734px;left:365.5px;top:618px;color:#808080">EURJPY,H1</div>
<div class="t" style="letter-spacing:-0.731px;left:441.5px;top:618px;color:#808080">AUDUSD,H1</div>
<div class="t" style="letter-spacing:-0.693px;left:521.5px;top:618px;color:#808080">USDCHF,H1</div>
<div class="t" style="letter-spacing:-0.906px;left:602.5px;top:618px;color:#808080">EURGBP,H1</div>
<div class="a" style="left:279px;top:618px;width:1px;height:13px;background:#808080"></div>
<div class="a" style="left:354px;top:618px;width:1px;height:13px;background:#808080"></div>
<div class="a" style="left:431px;top:618px;width:1px;height:13px;background:#808080"></div>
<div class="a" style="left:509px;top:618px;width:1px;height:13px;background:#808080"></div>
<div class="a" style="left:591px;top:618px;width:1px;height:13px;background:#808080"></div>
<div class="a" style="left:671px;top:618px;width:1px;height:13px;background:#808080"></div>
<svg class="a" style="left:1255px;top:619px" width="24" height="10"><path d="M5 1v8l-4-4zM19 1v8l4-4z" fill="#aca899"/></svg>
<div class="a" style="left:4px;top:635px;width:1280px;height:1px;background:#fff"></div>
<div class="a" style="left:5px;top:653px;width:13px;height:97px;background:#98b1e6"></div>
<svg class="a" style="left:8px;top:641px" width="8" height="8"><path d="M1 1l5 5M6 1l-5 5" stroke="#000" stroke-width="1.600"/></svg>
<div class="t" style="left:-9px;top:722px;width:42px;height:13px;line-height:13px;font-size:11px;color:#fff;transform:rotate(-90deg);transform-origin:center;text-align:left;letter-spacing:.3px">Terminal</div>
<div class="a" style="left:19px;top:639px;width:1262px;height:91px;background:#fff;border-top:1px solid #aca899;border-left:1px solid #aca899"></div>
<div class="a" style="left:1280px;top:639px;width:2px;height:110px;background:#f6f5ee"></div>
<div class="a" style="left:20px;top:640px;width:1260px;height:21px;background:linear-gradient(#ece9d8 0,#ece9d8 17px,#d8d4c2 19px,#c4c0ae 21px)"></div>
<div class="a" style="left:143px;top:643px;width:2px;height:13px;border-left:1px solid #aca899;border-right:1px solid #fff"></div>
<div class="a" style="left:143px;top:661px;width:1px;height:39px;background:#d4d0c8"></div>
<div class="a" style="left:354px;top:643px;width:2px;height:13px;border-left:1px solid #aca899;border-right:1px solid #fff"></div>
<div class="a" style="left:354px;top:661px;width:1px;height:39px;background:#d4d0c8"></div>
<div class="a" style="left:440px;top:643px;width:2px;height:13px;border-left:1px solid #aca899;border-right:1px solid #fff"></div>
<div class="a" style="left:440px;top:661px;width:1px;height:39px;background:#d4d0c8"></div>
<div class="a" style="left:507px;top:643px;width:2px;height:13px;border-left:1px solid #aca899;border-right:1px solid #fff"></div>
<div class="a" style="left:507px;top:661px;width:1px;height:39px;background:#d4d0c8"></div>
<div class="a" style="left:593px;top:643px;width:2px;height:13px;border-left:1px solid #aca899;border-right:1px solid #fff"></div>
<div class="a" style="left:593px;top:661px;width:1px;height:39px;background:#d4d0c8"></div>
<div class="a" style="left:689px;top:643px;width:2px;height:13px;border-left:1px solid #aca899;border-right:1px solid #fff"></div>
<div class="a" style="left:689px;top:661px;width:1px;height:39px;background:#d4d0c8"></div>
<div class="a" style="left:785px;top:643px;width:2px;height:13px;border-left:1px solid #aca899;border-right:1px solid #fff"></div>
<div class="a" style="left:785px;top:661px;width:1px;height:39px;background:#d4d0c8"></div>
<div class="a" style="left:881px;top:643px;width:2px;height:13px;border-left:1px solid #aca899;border-right:1px solid #fff"></div>
<div class="a" style="left:881px;top:661px;width:1px;height:39px;background:#d4d0c8"></div>
<div class="a" style="left:977px;top:643px;width:2px;height:13px;border-left:1px solid #aca899;border-right:1px solid #fff"></div>
<div class="a" style="left:977px;top:661px;width:1px;height:39px;background:#d4d0c8"></div>
<div class="a" style="left:1073px;top:643px;width:2px;height:13px;border-left:1px solid #aca899;border-right:1px solid #fff"></div>
<div class="a" style="left:1073px;top:661px;width:1px;height:39px;background:#d4d0c8"></div>
<div class="a" style="left:1169px;top:643px;width:2px;height:13px;border-left:1px solid #aca899;border-right:1px solid #fff"></div>
<div class="a" style="left:1169px;top:661px;width:1px;height:39px;background:#d4d0c8"></div>
<div class="a" style="left:1278px;top:643px;width:2px;height:13px;border-left:1px solid #aca899;border-right:1px solid #fff"></div>
<div class="a" style="left:1278px;top:661px;width:1px;height:39px;background:#d4d0c8"></div>
<div class="t" style="left:31px;top:644px">Order</div>
<svg class="a" style="left:71px;top:646px" width="10" height="9"><path d="M1 8L5 1" stroke="#aca899"/><path d="M5 1l4 7H1" stroke="#fff" fill="none"/></svg>
<div class="cell" style="left:249px;width:100px;top:644px">Time</div>
<div class="cell" style="left:336px;width:100px;top:644px">Type</div>
<div class="cell" style="left:402px;width:100px;top:644px">Size</div>
<div class="cell" style="left:488.5px;width:100px;top:644px">Symbol</div>
<div class="cell" style="left:584px;width:100px;top:644px">Price</div>
<div class="cell" style="left:680px;width:100px;top:644px">S / L</div>
<div class="cell" style="left:776.5px;width:100px;top:644px">T / P</div>
<div class="cell" style="left:872.5px;width:100px;top:644px">Price</div>
<div class="cell" style="left:968px;width:100px;top:644px">Commission</div>
<div class="cell" style="left:1064px;width:100px;top:644px">Swap</div>
<div class="cell" style="left:1172.5px;width:100px;top:644px">Profit</div>
<div class="a" style="left:20px;top:680px;width:1260px;height:20px;background:#316ac5"></div>
<div class="a" style="left:143px;top:680px;width:1px;height:20px;background:#7a9edc"></div>
<div class="a" style="left:354px;top:680px;width:1px;height:20px;background:#7a9edc"></div>
<div class="a" style="left:440px;top:680px;width:1px;height:20px;background:#7a9edc"></div>
<div class="a" style="left:507px;top:680px;width:1px;height:20px;background:#7a9edc"></div>
<div class="a" style="left:593px;top:680px;width:1px;height:20px;background:#7a9edc"></div>
<div class="a" style="left:689px;top:680px;width:1px;height:20px;background:#7a9edc"></div>
<div class="a" style="left:785px;top:680px;width:1px;height:20px;background:#7a9edc"></div>
<div class="a" style="left:881px;top:680px;width:1px;height:20px;background:#7a9edc"></div>
<div class="a" style="left:977px;top:680px;width:1px;height:20px;background:#7a9edc"></div>
<div class="a" style="left:1073px;top:680px;width:1px;height:20px;background:#7a9edc"></div>
<div class="a" style="left:1169px;top:680px;width:1px;height:20px;background:#7a9edc"></div>
<div class="a" style="left:1278px;top:680px;width:1px;height:20px;background:#7a9edc"></div>
<div class="t" style="left:44.500px;top:664px;color:#000">312860940</div>
<div class="cell" style="left:240px;width:110px;top:664px;color:#000">2010.08.13 16:16</div>
<div class="cell" style="left:327px;width:110px;top:664px;color:#000">buy</div>
<div class="cell" style="left:392px;width:110px;top:664px;color:#000">0.01</div>
<div class="cell" style="left:480px;width:110px;top:664px;color:#000">gbpusd</div>
<div class="cell" style="left:576px;width:110px;top:664px;color:#000">1.5595</div>
<div class="cell" style="left:672px;width:110px;top:664px;color:#000">1.5563</div>
<div class="cell" style="left:768px;width:110px;top:664px;color:#000">1.5644</div>
<div class="cell" style="left:864.5px;width:110px;top:664px;color:#000">1.5599</div>
<div class="cell" style="left:960px;width:110px;top:664px;color:#000">0.00</div>
<div class="cell" style="left:1056px;width:110px;top:664px;color:#000">0.00</div>
<div class="cell" style="left:1165px;width:110px;top:664px;color:#000">0.04</div>
<svg class="a" style="left:23px;top:662px" width="15" height="16"><path d="M1.500 1.500h7l3 3v9.500h-10z" fill="#fff" stroke="#555"/><path d="M8.500 1.500v3h3" fill="none" stroke="#555"/><circle cx="10.500" cy="11.500" r="3.200" fill="#2a90e8" stroke="#1060b0" stroke-width=".8"/></svg>
<div class="t" style="left:44.500px;top:684px;color:#fff">312861383</div>
<div class="cell" style="left:240px;width:110px;top:684px;color:#fff">2010.08.13 16:24</div>
<div class="cell" style="left:327px;width:110px;top:684px;color:#fff">buy</div>
<div class="cell" style="left:392px;width:110px;top:684px;color:#fff">0.01</div>
<div class="cell" style="left:480px;width:110px;top:684px;color:#fff">eurusd</div>
<div class="cell" style="left:576px;width:110px;top:684px;color:#fff">1.2809</div>
<div class="cell" style="left:672px;width:110px;top:684px;color:#fff">1.2767</div>
<div class="cell" style="left:768px;width:110px;top:684px;color:#fff">1.2883</div>
<div class="cell" style="left:864.5px;width:110px;top:684px;color:#fff">1.2813</div>
<div class="cell" style="left:960px;width:110px;top:684px;color:#fff">0.00</div>
<div class="cell" style="left:1056px;width:110px;top:684px;color:#fff">0.00</div>
<div class="cell" style="left:1165px;width:110px;top:684px;color:#fff">0.04</div>
<svg class="a" style="left:23px;top:682px" width="15" height="16"><path d="M1.500 1.500h7l3 3v9.500h-10z" fill="#fff" stroke="#555"/><path d="M8.500 1.500v3h3" fill="none" stroke="#555"/><circle cx="10.500" cy="11.500" r="3.200" fill="#2a90e8" stroke="#1060b0" stroke-width=".8"/></svg>
<div class="a" style="left:20px;top:700px;width:1260px;height:20px;background:#c0c0c0"></div>
<svg class="a" style="left:23px;top:703px" width="13" height="14"><rect x=".5" y=".5" width="11" height="12" fill="#fff" stroke="#777"/><path d="M6 2.500l4 4.500h-2.500v3.500h-3v-3.500h-2.500z" fill="#18a818" stroke="#0a6a0a" stroke-width=".6"/></svg>
<div class="t" style="letter-spacing:0.402px;left:44.500px;top:704px;font-weight:bold;white-space:pre">Balance: 101.19  Equity: 101.27  Margin: 0.71  Free margin: 100.56  Margin level: 14261.37%</div>
<div class="cell" style="left:1175px;width:100px;top:704px;font-weight:bold">0.08</div>
<div class="a" style="left:20px;top:729px;width:1260px;height:1px;background:#000"></div>
<div class="a" style="left:20px;top:730px;width:1260px;height:19px;background:#ece9d8"></div>
<div class="a" style="left:22px;top:729px;width:48px;height:18px;background:#fff;border:1px solid #000;border-top:none"></div>
<div class="a" style="left:70px;top:730px;width:1px;height:17px;background:#000"></div>
<div class="t" style="left:32px;top:732px">Trade</div>
<div class="t" style="letter-spacing:-0.135px;left:80px;top:732px;color:#808080">Account History</div>
<div class="t" style="letter-spacing:-0.504px;left:175.5px;top:732px;color:#808080">News</div>
<div class="t" style="letter-spacing:-0.104px;left:221.5px;top:732px;color:#808080">Alerts</div>
<div class="t" style="letter-spacing:-0.344px;left:269.5px;top:732px;color:#808080">Mailbox</div>
<div class="t" style="letter-spacing:-0.114px;left:325.5px;top:732px;color:#808080">Experts</div>
<div class="t" style="letter-spacing:-0.225px;left:382.5px;top:732px;color:#808080">Journal</div>
<div class="a" style="left:166px;top:733px;width:1px;height:12px;background:#808080"></div>
<div class="a" style="left:212px;top:733px;width:1px;height:12px;background:#808080"></div>
<div class="a" style="left:260px;top:733px;width:1px;height:12px;background:#808080"></div>
<div class="a" style="left:316px;top:733px;width:1px;height:12px;background:#808080"></div>
<div class="a" style="left:373px;top:733px;width:1px;height:12px;background:#808080"></div>
<div class="a" style="left:428px;top:733px;width:1px;height:12px;background:#808080"></div>
<div class="a" style="left:4px;top:751px;width:1280px;height:1px;background:#fff"></div>
<div class="a" style="left:4px;top:752px;width:1280px;height:1px;background:#d8d4c4"></div>
<div class="t" style="letter-spacing:-0.255px;left:5.5px;top:758px">For Help, press F1</div>
<div class="t" style="letter-spacing:-0.051px;left:569px;top:758px">Default</div>
<div class="t" style="letter-spacing:0.022px;left:678px;top:758px">2010.08.06 16:00</div>
<div class="t" style="letter-spacing:-0.036px;left:779px;top:758px">O: 1.5944</div>
<div class="t" style="letter-spacing:0.033px;left:850.5px;top:758px">H: 1.5989</div>
<div class="t" style="letter-spacing:0.014px;left:921.5px;top:758px">L: 1.5915</div>
<div class="t" style="letter-spacing:0.033px;left:990px;top:758px">C: 1.5986</div>
<div class="t" style="letter-spacing:-0.145px;left:1061.5px;top:758px">V: 1205</div>
<div class="t" style="letter-spacing:-0.150px;left:1179px;top:758px">451/2 kb</div>
<div class="ssep" style="left:564px"></div>
<div class="ssep" style="left:672px"></div>
<div class="ssep" style="left:773px"></div>
<div class="ssep" style="left:845px"></div>
<div class="ssep" style="left:916px"></div>
<div class="ssep" style="left:985px"></div>
<div class="ssep" style="left:1056px"></div>
<div class="ssep" style="left:1121px"></div>
<svg class="a" style="left:1128px;top:758px" width="24" height="14"><rect x="0.0" y="10.0" width="1.600" height="3.0" fill="#0a3a5a"/><rect x="0.0" y="1" width="1.600" height="7.0" fill="#5a8a10"/><rect x="2.6" y="8.9" width="1.600" height="4.1" fill="#0a3a5a"/><rect x="2.6" y="1" width="1.600" height="5.9" fill="#5a8a10"/><rect x="5.2" y="7.8" width="1.600" height="5.2" fill="#0a3a5a"/><rect x="5.2" y="1" width="1.600" height="4.8" fill="#5a8a10"/><rect x="7.8" y="6.7" width="1.600" height="6.3" fill="#0a3a5a"/><rect x="7.8" y="1" width="1.600" height="3.7" fill="#5a8a10"/><rect x="10.4" y="5.6" width="1.600" height="7.4" fill="#0a3a5a"/><rect x="10.4" y="1" width="1.600" height="2.6" fill="#5a8a10"/><rect x="13.0" y="4.5" width="1.600" height="8.5" fill="#0a3a5a"/><rect x="13.0" y="1" width="1.600" height="1.5" fill="#5a8a10"/><rect x="15.6" y="3.4" width="1.600" height="9.6" fill="#0a3a5a"/><rect x="15.6" y="1" width="1.600" height="0.4" fill="#5a8a10"/><rect x="18.2" y="2.3" width="1.600" height="10.7" fill="#0a3a5a"/><rect x="18.2" y="1" width="1.600" height="0.0" fill="#5a8a10"/><rect x="20.8" y="1.2" width="1.600" height="11.8" fill="#0a3a5a"/><rect x="20.8" y="1" width="1.600" height="0.0" fill="#5a8a10"/></svg>
<svg class="a" style="left:1270px;top:760px" width="14" height="14"><path d="M13 1L1 13M13 5L5 13M13 9L9 13" stroke="#aca899" stroke-width="1.200"/><path d="M13 2L2 13M13 6L6 13M13 10L10 13" stroke="#fff" stroke-width="1"/></svg>
<div class="a" style="left:4px;top:774px;width:1280px;height:4px;background:#2f6fe0"></div>
<div class="a" style="left:4px;top:774px;width:93px;height:4px;background:#4f9f4f;border-top-right-radius:4px"></div>
<div class="a" style="left:1137px;top:774px;width:147px;height:4px;background:#1aa6f0"></div>
</body></html>
